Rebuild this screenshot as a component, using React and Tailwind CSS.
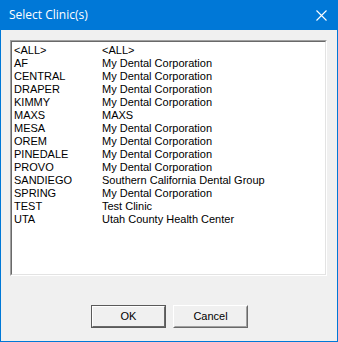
import React from 'react'

const clinics = [
  ['<ALL>', '<ALL>'],
  ['AF', 'My Dental Corporation'],
  ['CENTRAL', 'My Dental Corporation'],
  ['DRAPER', 'My Dental Corporation'],
  ['KIMMY', 'My Dental Corporation'],
  ['MAXS', 'MAXS'],
  ['MESA', 'My Dental Corporation'],
  ['OREM', 'My Dental Corporation'],
  ['PINEDALE', 'My Dental Corporation'],
  ['PROVO', 'My Dental Corporation'],
  ['SANDIEGO', 'Southern California Dental Group'],
  ['SPRING', 'My Dental Corporation'],
  ['TEST', 'Test Clinic'],
  ['UTA', 'Utah County Health Center'],
]

export default function App() {
  return (
    <div className="w-[338px] h-[342px] flex flex-col bg-[#0078d7] px-px pb-px">
      {/* Title bar */}
      <div className="h-[30px] flex items-center justify-between pl-[8px] pr-[9px] text-white">
        <span className="text-[12px] font-['Open_Sans',sans-serif]">Select Clinic(s)</span>
        <svg width="11" height="11" viewBox="0 0 11 11" className="mr-[1px]">
          <path d="M0.5 0.5 L10.5 10.5 M10.5 0.5 L0.5 10.5" stroke="white" strokeWidth="1.1" />
        </svg>
      </div>

      {/* Body */}
      <div className="flex-1 flex flex-col bg-[#f0f0f0] pt-[10px] pl-[9px] pr-[10px] font-['Liberation_Sans',Arial,sans-serif] text-[11px] text-black">
        {/* List box, sunken */}
        <div className="h-[236px] border border-t-[#a0a0a0] border-l-[#a0a0a0] border-r-white border-b-white">
          <div className="h-full border border-t-[#696969] border-l-[#696969] border-r-[#e3e3e3] border-b-[#e3e3e3] bg-white pt-[2px] pl-[2px]">
            {clinics.map(([code, name]) => (
              <div key={code} className="flex h-[13px] items-center leading-[13px]">
                <span className="w-[88px]">{code}</span>
                <span>{name}</span>
              </div>
            ))}
          </div>
        </div>

        {/* Buttons */}
        <div className="flex justify-center gap-[7px] mt-[29px] ml-[2px]">
          <button className="w-[75px] h-[23px] border border-[#5a5a5a] bg-[#f0f0f0]">
            <div className="h-full border border-t-white border-l-white border-r-[#696969] border-b-[#696969] flex items-center justify-center">
              OK
            </div>
          </button>
          <button className="w-[75px] h-[23px] border border-t-white border-l-white border-r-[#696969] border-b-[#696969] bg-[#f0f0f0]">
            <div className="h-full border border-t-[#f0f0f0] border-l-[#f0f0f0] border-r-[#a0a0a0] border-b-[#a0a0a0] flex items-center justify-center">
              Cancel
            </div>
          </button>
        </div>
      </div>
    </div>
  )
}
